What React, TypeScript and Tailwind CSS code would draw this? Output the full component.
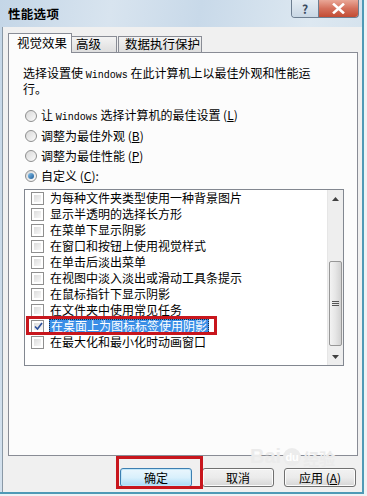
import React from "react";

const font = { fontFamily: '"Noto Sans CJK SC", "Liberation Sans", sans-serif' };

const items = [
  "为每种文件夹类型使用一种背景图片",
  "显示半透明的选择长方形",
  "在菜单下显示阴影",
  "在窗口和按钮上使用视觉样式",
  "在单击后淡出菜单",
  "在视图中淡入淡出或滑动工具条提示",
  "在鼠标指针下显示阴影",
  "在文件夹中使用常见任务",
  "在桌面上为图标标签使用阴影",
  "在最大化和最小化时动画窗口",
];

function Win() {
  return <span className="font-['Liberation_Mono'] text-[10px]">Windows</span>;
}

function Radio({ checked, children }: { checked?: boolean; children: React.ReactNode }) {
  return (
    <div className="h-[20px] flex items-center pl-[2px]">
      <span className="w-[12px] h-[12px] rounded-full border border-[#8e8f8f] bg-gradient-to-br from-[#d8d8d8] to-[#fbfbfb] flex items-center justify-center">
        {checked && (
          <span className="w-[6px] h-[6px] rounded-full bg-gradient-to-br from-[#86c2ec] to-[#1b5d98]" />
        )}
      </span>
      <span className="ml-[4px] leading-none">{children}</span>
    </div>
  );
}

function Checkbox({ checked }: { checked?: boolean }) {
  return (
    <span className="w-[13px] h-[13px] border border-[#8f8f8f] bg-white p-[2px] flex">
      <span className="flex-1 bg-gradient-to-br from-[#dcdcdc] to-[#f8f8f8] flex items-center justify-center">
        {checked && (
          <svg width="9" height="9" viewBox="0 0 9 9">
            <path d="M1 4.5 L3.5 7 L8 1" stroke="#2a4f9c" strokeWidth="1.6" fill="none" />
          </svg>
        )}
      </span>
    </span>
  );
}

function Button({ primary, children }: { primary?: boolean; children: React.ReactNode }) {
  return (
    <div
      className={
        primary
          ? "w-[72px] h-[19px] rounded-[3px] border border-[#3c7fb1] bg-gradient-to-b from-[#eaf6fd] via-[#d9f0fc] to-[#a7d9f5] flex items-center justify-center text-[12px] shadow-[inset_0_0_0_1px_#c0e6f9]"
          : "w-[72px] h-[19px] rounded-[3px] border border-[#707070] bg-gradient-to-b from-[#f2f2f2] via-[#ebebeb] to-[#d6d6d6] flex items-center justify-center text-[12px] shadow-[inset_0_0_0_1px_#fcfcfc]"
      }
    >
      {children}
    </div>
  );
}

export default function App() {
  return (
    <div className="w-[367px] h-[496px] bg-[#eef2f5] relative overflow-hidden text-black text-[12px]" style={font}>
      <div className="w-[364px] h-[494px] flex flex-col bg-[linear-gradient(100deg,#c4d6e7_0%,#d8e4ef_25%,#c8d9e9_45%,#dde8f1_70%,#cadbe9_100%)] border-r-2 border-b-2 border-[#4f9ab6]">
        {/* Title bar */}
        <div className="h-[27px] flex items-start shrink-0">
          <div className="pl-[8px] pt-[8px] font-bold text-[12.5px] leading-none tracking-[0.3px]">性能选项</div>
          <div className="ml-auto mr-[3px] flex h-[18px] border border-t-0 border-[#6d7e90] rounded-b-[4px] overflow-hidden">
            <div className="w-[27px] bg-gradient-to-b from-[#e4ecf3] to-[#c9d7e4] border-r border-[#6d7e90] flex items-center justify-center text-[#3a4b5e] text-[12px] font-bold">
              ?
            </div>
            <div className="w-[39px] bg-gradient-to-b from-[#e9a797] via-[#d4705c] to-[#c24b33] flex items-center justify-center">
              <svg width="13" height="11" viewBox="0 0 13 11">
                <path d="M2 1.5 L11 9.5 M11 1.5 L2 9.5" stroke="#fff" strokeWidth="2.6" strokeLinecap="square" />
              </svg>
            </div>
          </div>
        </div>

        {/* Client area */}
        <div className="flex-1 ml-[2px] border-l border-[#8a99a6] bg-[#f0f0f0] pt-[6px] pl-[5px] pr-[4px] flex flex-col">
          {/* Tabs */}
          <div className="h-[19px] flex items-end relative z-10">
            <div className="h-[20px] w-[64px] -mb-[1px] bg-[#fcfcfc] border border-b-0 border-[#898c95] flex items-center pl-[8px] text-[12.5px]">
              视觉效果
            </div>
            <div className="h-[16px] w-[46px] -ml-[1px] bg-gradient-to-b from-[#f3f3f3] to-[#dedede] border border-b-0 border-[#898c95] flex items-center pl-[4px] text-[12.5px]">
              高级
            </div>
            <div className="h-[16px] w-[84px] ml-[1px] bg-gradient-to-b from-[#f3f3f3] to-[#dedede] border border-b-0 border-[#898c95] flex items-center pl-[6px] text-[12.5px]">
              数据执行保护
            </div>
          </div>

          {/* Panel */}
          <div className="h-[404px] border border-[#898c95] bg-[#fcfcfc] pt-[13px] pl-[14px]">
            <div className="leading-[13px]">
              选择设置使 <Win /> 在此计算机上以最佳外观和性能运
              <br />
              行。
            </div>
            <div className="mt-[11px]">
              <Radio>
                让 <Win /> 选择计算机的最佳设置 (<u>L</u>)
              </Radio>
              <Radio>
                调整为最佳外观 (<u>B</u>)
              </Radio>
              <Radio>
                调整为最佳性能 (<u>P</u>)
              </Radio>
              <Radio checked>
                自定义 (<u>C</u>):
              </Radio>
            </div>

            {/* List */}
            <div className="mt-[3px] ml-[1px] w-[320px] h-[177px] border border-[#828790] bg-white flex">
              <div className="flex-1 pl-[6px]">
                {items.map((t, i) => (
                  <div key={t} className="h-[16px] flex items-center">
                    <Checkbox checked={i === 8} />
                    {i === 8 ? (
                      <span className="ml-[5px] px-[1px] h-[15px] flex items-center bg-[#3a8ee6] text-white border border-dotted border-[#1c2a40] leading-none">
                        {t}
                      </span>
                    ) : (
                      <span className="ml-[6px] leading-none">{t}</span>
                    )}
                  </div>
                ))}
              </div>
              {/* Scrollbar */}
              <div className="w-[16px] bg-[#eeeeee] border-l border-[#e6e6e6] flex flex-col">
                <div className="h-[17px] flex items-center justify-center">
                  <svg width="7" height="4" viewBox="0 0 7 4">
                    <path d="M0 4 L3.5 0 L7 4 Z" fill="#404040" />
                  </svg>
                </div>
                <div className="h-[54px]" />
                <div className="h-[85px] mx-[1px] rounded-[2px] border border-[#979797] bg-gradient-to-r from-[#f3f3f3] via-[#e6e6e6] to-[#d2d2d2] flex items-center justify-center">
                  <div className="flex flex-col gap-[1px]">
                    <span className="w-[7px] h-[1px] bg-[#555]" />
                    <span className="w-[7px] h-[1px] bg-[#555]" />
                    <span className="w-[7px] h-[1px] bg-[#555]" />
                  </div>
                </div>
                <div className="flex-1" />
                <div className="h-[17px] flex items-center justify-center">
                  <svg width="7" height="4" viewBox="0 0 7 4">
                    <path d="M0 0 L3.5 4 L7 0 Z" fill="#404040" />
                  </svg>
                </div>
              </div>
            </div>
          </div>

          {/* Buttons */}
          <div className="mt-[12px] mr-[2px] flex justify-end gap-[10px]">
            <Button primary>确定</Button>
            <Button>取消</Button>
            <Button>
              应用 (<u>A</u>)
            </Button>
          </div>
        </div>
      </div>

      {/* Watermark */}
      <div className="absolute left-[250px] top-[446px] flex items-end gap-[2px] text-[#ebebeb] pointer-events-none">
        <span className="font-['Liberation_Sans'] font-bold text-[20px] leading-none">Bai</span>
        <span className="w-[18px] h-[18px] rounded-full bg-[#ececec] text-white text-[11px] font-bold flex items-center justify-center font-['Liberation_Sans']">
          du
        </span>
        <span className="text-[16px] leading-none font-bold">经验</span>
      </div>

      {/* Red annotation boxes */}
      <div className="absolute left-[26px] top-[316px] w-[191px] h-[19px] border-[3px] border-[#c8161d]" />
      <div className="absolute left-[116px] top-[456px] w-[87px] h-[33px] border-[3px] border-[#c8161d]" />
    </div>
  );
}
